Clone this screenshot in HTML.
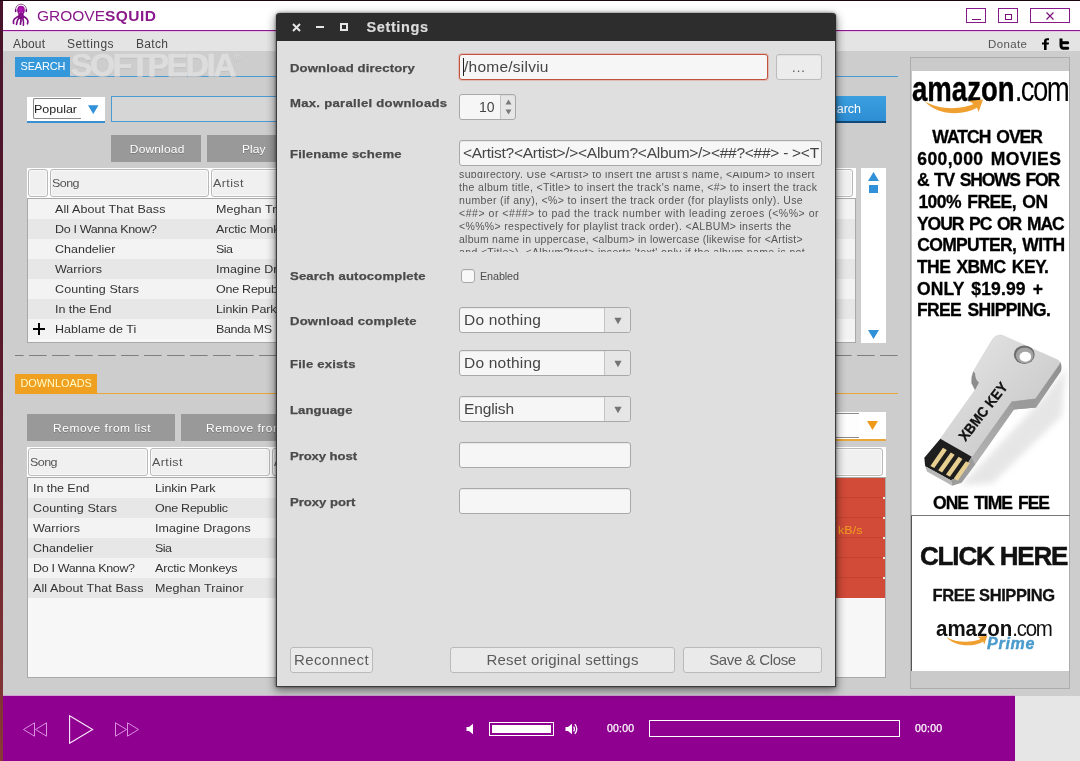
<!DOCTYPE html>
<html>
<head>
<meta charset="utf-8">
<title>GrooveSquid</title>
<style>
*{box-sizing:border-box;margin:0;padding:0}
html,body{width:1080px;height:761px;overflow:hidden}
body{will-change:transform;position:relative;font-family:"Liberation Sans",sans-serif;background:#cdcdcd;color:#333}
.abs,.abs *{position:absolute}
#leftstrip{left:0;top:0;width:3px;height:761px;background:linear-gradient(#46132a 0%,#5c1a2c 50%,#8a3a36 100%);z-index:50}
#topstrip{left:0;top:0;width:1080px;height:1px;background:#1c0612;z-index:51}
#titlebar{left:0;top:0;width:1080px;height:30px;background:#fff}
#titleline{left:0;top:30px;width:1080px;height:2px;background:linear-gradient(#8a1a8c 0,#8a1a8c 50%,#ecc0ec 50%)}
#menubar{left:0;top:32px;width:1080px;height:19px;background:#e4e4e4}
.menu{top:37px;font-size:12px;color:#444;line-height:14px;white-space:nowrap}
.wbtn{top:8px;height:15px;border:1px solid #86188a;background:#fff}
#rightbot{left:1015px;top:696px;width:65px;height:65px;background:#e6e6e6}
#player{left:0;top:696px;width:1015px;height:65px;background:#8f0090}
.tab{color:#fff;font-size:10.9px;line-height:18.4px;padding-left:5.5px;white-space:nowrap}
.gbtn{background:#999;color:#fff;font-size:11px;text-align:center;text-shadow:0 1px 0 #777;white-space:nowrap}
.tbl{background:#fff;overflow:hidden}
.tb{left:0;top:30px;width:100%;height:calc(100% - 30px);border:1px solid #a9a9a9;background:#f7f7f7}
.hc{margin-left:1px;top:1px;height:28px;border:1px solid #b9b9b9;border-radius:3px;background:#f0f0f0;font-size:11.5px;color:#555;line-height:26px;padding-left:1px;box-shadow:inset 0 0 0 1px #fafafa;white-space:nowrap;overflow:hidden}
.w8{display:inline-block;transform:scaleX(1.087);transform-origin:0 50%}
.w8c{display:inline-block;transform:scaleX(1.087);transform-origin:50% 50%}
.w15{display:inline-block;transform:scaleX(1.14);transform-origin:0 50%}
.row{left:1px;margin-top:1px;height:20px;font-size:11.5px;color:#333;line-height:20px;white-space:nowrap}
.row span{top:0}
.row>span{transform:scaleX(1.087);transform-origin:0 50%}
.s{position:static !important}
.ev{background:#f3f3f3}.od{background:#e7e7e7}
</style>
</head>
<body>
<div id="titlebar" class="abs"></div>
<div id="titleline" class="abs"></div>
<div id="menubar" class="abs"></div>
<!--TITLE-->
<svg class="abs" style="left:8px;top:0px" width="30" height="30" viewBox="0 0 30 30">
 <defs><radialGradient id="sq" cx=".5" cy=".4" r=".6"><stop offset="0" stop-color="#c414c6"/><stop offset="1" stop-color="#7c0c80"/></radialGradient></defs>
 <path d="M7.6 11.2C7.2 6.8 9.8 4.2 13 4.2C16.2 4.2 18.8 6.8 18.4 11.2" fill="none" stroke="#5a1060" stroke-width="0.7"/>
 <rect x="6.9" y="9" width="1.5" height="3.2" rx=".7" fill="#6a0c70"/>
 <rect x="17.6" y="9" width="1.5" height="3.2" rx=".7" fill="#6a0c70"/>
 <ellipse cx="13" cy="10.2" rx="3.8" ry="4.4" fill="url(#sq)"/>
 <path d="M10.2 13.4C10.6 15 10.4 16 9.6 16.8L16.4 16.8C15.6 16 15.4 15 15.8 13.4Z" fill="#86108a"/>
 <g fill="none" stroke="#7e0e84" stroke-linecap="round">
  <path d="M10.6 16.2C8.6 17.4 6.2 18 5.6 20.4C5.3 21.6 5.5 22.6 5.6 23.4" stroke-width="1.7"/>
  <path d="M11.6 17C10.2 18.6 8.8 20.2 8.5 24.4" stroke-width="1.7"/>
  <path d="M13 17C13.2 19.4 13 21.8 12.4 24.2" stroke-width="1.7"/>
  <path d="M14.4 17C15.2 19.4 16 21.6 15.4 25.2" stroke-width="1.7"/>
  <path d="M15.4 16.2C17.4 17.4 19.4 18.2 19.8 20.6C20 21.8 19.7 23 19.5 23.8" stroke-width="1.7"/>
 </g>
 <path d="M9.8 16.2H16.2L15.4 19H10.6Z" fill="#7e0e84"/>
 <circle cx="11.8" cy="12.4" r=".55" fill="#d66fda"/><circle cx="14.2" cy="12.4" r=".55" fill="#d66fda"/>
</svg>
<div class="abs" style="left:37px;top:6px;font-size:15.5px;line-height:20px;color:#8a1a8c;white-space:nowrap"><span class="s" style="letter-spacing:-0.01px">GROOVE</span><b class="s" style="letter-spacing:0.48px">SQUID</b></div>
<div class="abs wbtn" style="left:966px;width:20px"><div style="left:5px;top:10px;width:9px;height:1px;background:#7a107c"></div></div>
<div class="abs wbtn" style="left:998px;width:20px"><div style="left:6px;top:5px;width:7px;height:6px;border:1px solid #7a107c"></div></div>
<div class="abs wbtn" style="left:1030px;width:40px"><svg style="left:15px;top:3px" width="8" height="8" viewBox="0 0 8 8"><path d="M0.5 0.5L7.5 7.5M7.5 0.5L0.5 7.5" stroke="#7a107c" stroke-width="1.2"/></svg></div>
<div class="abs menu" style="left:13px"><span class="s" style="letter-spacing:0.16px">About</span></div>
<div class="abs menu" style="left:67px"><span class="s" style="letter-spacing:0.45px">Settings</span></div>
<div class="abs menu" style="left:136px"><span class="s" style="letter-spacing:0.33px">Batch</span></div>
<div class="abs menu" style="left:988px;font-size:11.5px;color:#555"><span class="s" style="letter-spacing:0.38px">Donate</span></div>
<svg class="abs" style="left:1041px;top:38px" width="9" height="12" viewBox="0 0 9 12"><path d="M3 12V6.6H1V4.6H3V3.2C3 1.2 4.2 0.2 6 0.2H8V2.2H6.6C5.8 2.2 5.6 2.6 5.6 3.2V4.6H8L7.7 6.6H5.6V12Z" fill="#000"/></svg>
<svg class="abs" style="left:1058px;top:38px" width="12" height="12" viewBox="0 0 12 12"><path d="M1.5 0.5H4.5V3.3H9.6C10.6 3.3 11.2 4 11.2 4.8C11.2 5.7 10.6 6.3 9.6 6.3H4.5V7.4C4.5 8.2 5 8.7 5.8 8.7H9.6C10.6 8.7 11.2 9.4 11.2 10.2C11.2 11.1 10.6 11.7 9.6 11.7H5.4C3 11.7 1.5 10.2 1.5 7.8Z" fill="#000"/></svg>
<!--MAIN-->
<div class="abs" style="left:15px;top:76px;width:883px;height:1px;background:#4a9ad4"></div>
<div class="abs tab" style="left:15px;top:57px;width:55px;height:20px;background:#3498db"><span class="s" style="letter-spacing:-0.12px">SEARCH</span></div>
<div class="abs" style="left:71px;top:46.5px;font-size:32px;font-weight:bold;color:#dddddd;line-height:36px;text-shadow:0 1px 1px #b9b9b9;white-space:nowrap;-webkit-text-stroke:.7px #dddddd"><span class="s" style="letter-spacing:-2.20px">SOFTPEDIA</span><span class="s" style="font-size:9px;vertical-align:top;letter-spacing:0;font-weight:normal;line-height:22px;-webkit-text-stroke:0">&reg;</span></div>
<div class="abs" style="left:27px;top:97px;width:78px;height:26px;background:#fff;border-bottom:2px solid #3a8fd0">
  <div style="left:6px;top:1px;width:48px;height:21px;border:1px solid #8a8a8a;border-right:none;border-radius:2px 0 0 2px;background:#fdfdfd"></div>
  <div style="left:6.5px;top:4px;font-size:11.5px;line-height:16px;color:#222;"><span class="s w8" style="letter-spacing:-0.01px">Popular</span></div>
  <svg style="left:61.3px;top:8px" width="10.5" height="9" viewBox="0 0 12 10"><path d="M0 0H12L6 10Z" fill="#3090d8"/></svg>
</div>
<div class="abs" style="left:111px;top:96px;width:740px;height:26px;background:#d6d6d6;border:1px solid #4a9ad4"></div>
<div class="abs" style="left:800px;top:96px;width:86px;height:27px;background:linear-gradient(#3b9fe0,#2e8ed4);border-bottom:2px solid #104a78;color:#fff;font-size:12.5px;line-height:27px;padding-left:21.5px"><span class="s" style="letter-spacing:-0.02px">Search</span></div>
<div class="abs gbtn" style="left:111px;top:135px;width:90px;height:27px;line-height:29px;padding-left:2px"><span class="s w8c" style="letter-spacing:0.17px">Download</span></div>
<div class="abs gbtn" style="left:207px;top:135px;width:90px;height:27px;line-height:29px;padding-left:4px"><span class="s w8c" style="letter-spacing:0.07px">Play</span></div>
<div class="abs tbl" style="left:27px;top:168px;width:829px;height:175px">
  <div class="hc" style="left:0px;width:20px"></div>
  <div class="hc" style="left:22px;width:159px"><span class="s w8" style="letter-spacing:-0.52px">Song</span></div>
  <div class="hc" style="left:183px;width:159px"><span class="s w8" style="letter-spacing:0.37px">Artist</span></div>
  <div class="hc" style="left:666px;width:159px"></div>
<div class="tb"></div>
<div class="row ev" style="top:30px;width:calc(100% - 2px)"><span style="left:27px"><span class="s" style="letter-spacing:0.08px">All About That Bass</span></span><span style="left:188px"><span class="s" style="letter-spacing:0.07px">Meghan Trainor</span></span></div>
<div class="row od" style="top:50px;width:calc(100% - 2px)"><span style="left:27px"><span class="s" style="letter-spacing:-0.32px">Do I Wanna Know?</span></span><span style="left:188px"><span class="s" style="letter-spacing:-0.16px">Arctic Monkeys</span></span></div>
<div class="row ev" style="top:70px;width:calc(100% - 2px)"><span style="left:27px"><span class="s" style="letter-spacing:0.00px">Chandelier</span></span><span style="left:188px"><span class="s" style="letter-spacing:-0.49px">Sia</span></span></div>
<div class="row od" style="top:90px;width:calc(100% - 2px)"><span style="left:27px"><span class="s" style="letter-spacing:0.03px">Warriors</span></span><span style="left:188px"><span class="s" style="letter-spacing:0.03px">Imagine Dragons</span></span></div>
<div class="row ev" style="top:110px;width:calc(100% - 2px)"><span style="left:27px"><span class="s" style="letter-spacing:0.09px">Counting Stars</span></span><span style="left:188px"><span class="s" style="letter-spacing:-0.23px">One Republic</span></span></div>
<div class="row od" style="top:130px;width:calc(100% - 2px)"><span style="left:27px"><span class="s" style="letter-spacing:-0.05px">In the End</span></span><span style="left:188px"><span class="s" style="letter-spacing:-0.12px">Linkin Park</span></span></div>
<div class="row ev" style="top:150px;width:calc(100% - 2px)"><span style="left:27px"><span class="s" style="letter-spacing:0.05px">Hablame de Ti</span></span><span style="left:188px"><span class="s" style="letter-spacing:-0.31px">Banda MS</span></span></div>
</div>
<div class="abs" style="left:33px;top:323px;width:12px;height:12px"><div style="left:0;top:5px;width:12px;height:2px;background:#000"></div><div style="left:5px;top:0;width:2px;height:12px;background:#000"></div></div>
<div class="abs" style="left:861px;top:168px;width:25px;height:175px;background:#fff">
  <svg style="left:7px;top:4px" width="11" height="9" viewBox="0 0 11 9"><path d="M0 9H11L5.5 0Z" fill="#3090d8"/></svg>
  <div style="left:8px;top:17px;width:9px;height:8px;background:#3090d8"></div>
  <svg style="left:7px;top:162px" width="11" height="9" viewBox="0 0 11 9"><path d="M0 0H11L5.5 9Z" fill="#3090d8"/></svg>
</div>
<svg class="abs" style="left:15px;top:355px" width="883" height="2"><line x1="0" y1="0.5" x2="883" y2="0.5" stroke="#7e7e7e" stroke-width="1" stroke-dasharray="17.5 5.5" stroke-dashoffset="8.9"/></svg>
<div class="abs" style="left:15px;top:393px;width:883px;height:1px;background:#e8a738"></div>
<div class="abs tab" style="left:15px;top:374px;width:82px;height:20px;background:#f0a020;color:#fffbc8"><span class="s" style="letter-spacing:-0.01px">DOWNLOADS</span></div>
<div class="abs gbtn" style="left:27px;top:414px;width:148px;height:27px;line-height:29px;padding-left:2px"><span class="s w8c" style="letter-spacing:0.48px">Remove from list</span></div>
<div class="abs gbtn" style="left:181px;top:414px;width:148px;height:27px;line-height:29px;text-align:left;padding-left:25px"><span class="s w8" style="letter-spacing:0.48px">Remove from list and disk</span></div>
<div class="abs" style="left:700px;top:412px;width:186px;height:29px;background:#fff;border-bottom:2px solid #e8a738">
  <div style="left:6px;top:1px;width:153px;height:25px;border:1px solid #8a8a8a;border-right:none;background:#fdfdfd"></div>
  <svg style="left:167px;top:9px" width="11" height="9" viewBox="0 0 11 9"><path d="M0 0H11L5.5 9Z" fill="#f0981a"/></svg>
</div>
<div class="abs tbl" style="left:27px;top:447px;width:859px;height:231px">
  <div class="hc" style="left:0px;width:120px"><span class="s w8" style="letter-spacing:-0.52px">Song</span></div>
  <div class="hc" style="left:122px;width:120px"><span class="s w8" style="letter-spacing:0.37px">Artist</span></div>
  <div class="hc" style="left:244px;width:120px">Album</div>
  <div class="hc" style="left:735px;width:120px"></div>
<div class="tb"></div>
<div class="row ev" style="top:30px;width:calc(100% - 2px)"><span style="left:5px"><span class="s" style="letter-spacing:-0.05px">In the End</span></span><span style="left:127px"><span class="s" style="letter-spacing:-0.12px">Linkin Park</span></span></div>
<div class="row od" style="top:50px;width:calc(100% - 2px)"><span style="left:5px"><span class="s" style="letter-spacing:0.09px">Counting Stars</span></span><span style="left:127px"><span class="s" style="letter-spacing:-0.23px">One Republic</span></span></div>
<div class="row ev" style="top:70px;width:calc(100% - 2px)"><span style="left:5px"><span class="s" style="letter-spacing:0.03px">Warriors</span></span><span style="left:127px"><span class="s" style="letter-spacing:0.03px">Imagine Dragons</span></span></div>
<div class="row od" style="top:90px;width:calc(100% - 2px)"><span style="left:5px"><span class="s" style="letter-spacing:0.00px">Chandelier</span></span><span style="left:127px"><span class="s" style="letter-spacing:-0.49px">Sia</span></span></div>
<div class="row ev" style="top:110px;width:calc(100% - 2px)"><span style="left:5px"><span class="s" style="letter-spacing:-0.32px">Do I Wanna Know?</span></span><span style="left:127px"><span class="s" style="letter-spacing:-0.16px">Arctic Monkeys</span></span></div>
<div class="row od" style="top:130px;width:calc(100% - 2px)"><span style="left:5px"><span class="s" style="letter-spacing:0.08px">All About That Bass</span></span><span style="left:127px"><span class="s" style="letter-spacing:0.07px">Meghan Trainor</span></span></div>
  <div style="left:600px;top:31px;width:258px;height:120px;background:#d24a38"><div style="left:0;top:19px;width:258px;height:1px;background:#c4422f"></div><div style="left:256px;top:19px;width:2px;height:2px;background:#f4e4e0"></div><div style="left:0;top:39px;width:258px;height:1px;background:#c4422f"></div><div style="left:256px;top:39px;width:2px;height:2px;background:#f4e4e0"></div><div style="left:0;top:59px;width:258px;height:1px;background:#c4422f"></div><div style="left:256px;top:59px;width:2px;height:2px;background:#f4e4e0"></div><div style="left:0;top:79px;width:258px;height:1px;background:#c4422f"></div><div style="left:256px;top:79px;width:2px;height:2px;background:#f4e4e0"></div><div style="left:0;top:99px;width:258px;height:1px;background:#c4422f"></div><div style="left:256px;top:99px;width:2px;height:2px;background:#f4e4e0"></div></div>
  <div style="left:811px;top:76px;font-size:11.5px;line-height:14px;color:#f0a020;"><span class="s w8" style="letter-spacing:0.05px">kB/s</span></div>
</div>
<!--AD-->
<style>
.adl{margin-top:.7px;-webkit-text-stroke:.3px #000;word-spacing:2px;font-weight:bold;font-size:17.5px;line-height:21px;color:#000;letter-spacing:-.9px;white-space:nowrap}
</style>
<div class="abs" style="left:910px;top:57px;width:160px;height:632px;background:#cacaca;border:1px solid #acacac"></div>
<div class="abs" style="left:912px;top:71px;width:157px;height:444px;background:#fff"></div>
<div class="abs" style="left:911px;top:515px;width:159px;height:1px;background:#777"></div>
<div class="abs" style="left:911px;top:516px;width:1px;height:155px;background:#555"></div>
<div class="abs" style="left:912px;top:516px;width:157px;height:155px;background:#fff"></div>
<div class="abs" id="amz1" style="left:912px;top:70.5px;font-size:34.7px;line-height:36px;color:#000;white-space:nowrap;transform-origin:0 0;transform:scaleX(.795)"><b class="s" style="-webkit-text-stroke:.4px #000">amazon</b><span class="s" style="letter-spacing:-2px">.com</span></div>
<svg class="abs" style="left:924px;top:99px" width="60" height="16" viewBox="0 0 60 16"><path d="M1 2.6C14 10.5 36 11.5 51 4.6L53.5 8.6C38 17.5 12 16 1 2.6Z" fill="#f0a030"/><path d="M45 1.8L59 0.6L54.6 13L52.6 7.4Z" fill="#f0a030"/></svg>
<div class="abs">
<div class="adl" style="top:126.5px;left:932.3px"><span class="s" style="letter-spacing:-0.96px">WATCH OVER</span></div>
<div class="adl" style="top:148.2px;left:917.3px"><span class="s" style="letter-spacing:0.41px">600,000 MOVIES</span></div>
<div class="adl" style="top:169.8px;left:917.0px"><span class="s" style="letter-spacing:-1.20px">&amp; TV SHOWS FOR</span></div>
<div class="adl" style="top:191.4px;left:918.4px"><span class="s" style="letter-spacing:-0.55px">100% FREE, ON</span></div>
<div class="adl" style="top:213.1px;left:917.0px"><span class="s" style="letter-spacing:-1.07px">YOUR PC OR MAC</span></div>
<div class="adl" style="top:234.8px;left:917.3px"><span class="s" style="letter-spacing:-0.68px">COMPUTER, WITH</span></div>
<div class="adl" style="top:256.4px;left:917.0px"><span class="s" style="letter-spacing:-0.60px">THE XBMC KEY.</span></div>
<div class="adl" style="top:278.0px;left:917.0px"><span class="s" style="letter-spacing:0.15px">ONLY $19.99 +</span></div>
<div class="adl" style="top:299.7px;left:917.0px"><span class="s" style="letter-spacing:-0.63px">FREE SHIPPING.</span></div>
</div>
<!--KEY-->
<svg class="abs" style="left:910px;top:325px" width="160" height="165" viewBox="0 0 738 761">
<defs>
<linearGradient id="kg" x1="0" y1="0" x2="1" y2="1"><stop offset="0" stop-color="#e8e8e8"/><stop offset=".45" stop-color="#d6d6d6"/><stop offset="1" stop-color="#c2c2c2"/></linearGradient>
<linearGradient id="ks" x1="0" y1="0" x2="0" y2="1"><stop offset="0" stop-color="#8e8e8e"/><stop offset="1" stop-color="#b4b4b4"/></linearGradient>
<filter id="kb" x="-20%" y="-20%" width="140%" height="140%"><feGaussianBlur stdDeviation="14"/></filter>
</defs>
<path d="M330 640L620 330L720 200L700 420L380 730L230 740Z" fill="#e6e6e6" filter="url(#kb)"/>
<path d="M692 170Q702 185 697 212L582 380L480 390L302 642L285 608L468 352L578 338Z" fill="url(#ks)"/>
<path d="M578 338L582 380L480 390L468 352Z" fill="#9a9a9a"/>
<path d="M375 75Q395 40 425 47L680 160Q695 168 690 180L578 338L468 352L285 608L140 525L300 300L282 268Q280 240 292 215Z" fill="url(#kg)" stroke="#c8c8c8" stroke-width="2"/>
<path d="M292 215Q282 240 284 268L300 300L318 265Q300 250 300 222Z" fill="#8c8c8c"/>
<path d="M140 525L285 608L228 700L188 716L70 652L66 612Z" fill="#1e1e1e"/>
<path d="M285 608L302 642L238 728L195 742L188 716L228 700Z" fill="#9c9c9c"/>
<path d="M70 652L188 716L195 742L78 676Z" fill="#b8b8b8"/>
<path d="M152 566L170 576L112 660L94 650Z M188 588L206 598L148 680L130 670Z M224 608L242 618L184 700L166 690Z M258 628L276 638L220 718L202 708Z" fill="#e6cf90"/>
<ellipse cx="527" cy="137" rx="48" ry="43" fill="#6c6c6c"/>
<ellipse cx="529" cy="140" rx="41" ry="36" fill="#a4a4a4"/>
<ellipse cx="532" cy="146" rx="27" ry="23" fill="#fff"/>
<text transform="translate(256,540) rotate(-52)" font-family="Liberation Sans, sans-serif" font-weight="bold" font-size="66" fill="#111" stroke="#111" stroke-width="1.5" textLength="322" lengthAdjust="spacingAndGlyphs">XBMC KEY</text>
</svg>
<div class="abs adl" style="top:492px;left:933px"><span class="s" style="letter-spacing:-0.95px">ONE TIME FEE</span></div>
<div class="abs" style="left:920px;top:540.5px;font-weight:bold;font-size:26px;line-height:30px;color:#111;white-space:nowrap;-webkit-text-stroke:.5px #111"><span class="s" style="letter-spacing:-1.16px">CLICK HERE</span></div>
<div class="abs" style="left:932.5px;top:585px;font-weight:bold;font-size:16.5px;line-height:20px;color:#111;white-space:nowrap;-webkit-text-stroke:.3px #111"><span class="s" style="letter-spacing:-0.41px">FREE SHIPPING</span></div>
<div class="abs" id="amz2" style="left:935.5px;top:617.2px;font-size:21.8px;line-height:23px;color:#111;white-space:nowrap;transform-origin:0 0;transform:scaleX(.94)"><b class="s">amazon</b><span class="s" style="letter-spacing:-1.35px">.com</span></div>
<svg class="abs" style="left:946px;top:635px" width="42" height="12" viewBox="0 0 60 16"><path d="M1 2.6C14 10.5 36 11.5 51 4.6L53.5 8.6C38 17.5 12 16 1 2.6Z" fill="#f0a030"/><path d="M45 1.8L59 0.6L54.6 13L52.6 7.4Z" fill="#f0a030"/></svg>
<div class="abs" style="left:987px;top:634.5px;font-size:16px;line-height:18px;font-weight:bold;font-style:italic;color:#4a9bcc;white-space:nowrap;-webkit-text-stroke:.4px #4a9bcc"><span class="s" style="letter-spacing:0.76px">Prime</span></div>
<div id="player" class="abs"></div>
<div class="abs" style="left:0;top:695px;width:1015px;height:1px;background:#d3a2d5"></div>
<div id="rightbot" class="abs"></div>
<!--PLAYER-->
<svg class="abs" style="left:22px;top:721px" width="27" height="17" viewBox="0 0 27 17"><path d="M12.5 1.8V15.2L1.5 8.5Z M24.5 1.8V15.2L13.5 8.5Z" fill="none" stroke="#dc8fe0" stroke-width="1"/></svg>
<svg class="abs" style="left:68px;top:714px" width="27" height="31" viewBox="0 0 27 31"><path d="M1.6 1.8V29.2L24.6 15.5Z" fill="none" stroke="#fbeafc" stroke-width="1.1"/></svg>
<svg class="abs" style="left:114px;top:721px" width="27" height="17" viewBox="0 0 27 17"><path d="M1.5 1.8V15.2L12.5 8.5Z M13.5 1.8V15.2L24.5 8.5Z" fill="none" stroke="#dc8fe0" stroke-width="1"/></svg>
<svg class="abs" style="left:466px;top:723px" width="8" height="12" viewBox="0 0 8 12"><path d="M0.5 4H3L7 0.8V11.2L3 8H0.5Z" fill="#fff"/></svg>
<div class="abs" style="left:489px;top:722px;width:65px;height:14px;border:1px solid #fff"><div style="left:2px;top:2px;width:59px;height:8px;background:#fff"></div></div>
<svg class="abs" style="left:565px;top:722px" width="14" height="14" viewBox="0 0 14 14"><path d="M0.5 5H3L7 1.8V12.2L3 9H0.5Z" fill="#fff"/><path d="M8.6 4.6Q10.4 7 8.6 9.4" fill="none" stroke="#fff" stroke-width="1.2"/><path d="M9.8 2.2Q13.8 7 9.8 11.8" fill="none" stroke="#fff" stroke-width="1.3"/></svg>
<div class="abs" style="left:607px;top:722px;font-size:10.5px;line-height:13px;color:#fff;white-space:nowrap;-webkit-text-stroke:.25px #fff"><span class="s" style="letter-spacing:0.18px">00:00</span></div>
<div class="abs" style="left:649px;top:720px;width:251px;height:17px;border:1px solid #fff"></div>
<div class="abs" style="left:915px;top:722px;font-size:10.5px;line-height:13px;color:#fff;white-space:nowrap;-webkit-text-stroke:.25px #fff"><span class="s" style="letter-spacing:0.18px">00:00</span></div>
<!--DIALOG-->
<style>
#dlg{left:276px;top:13px;width:560px;height:674px;background:#dfdfdf;border:1px solid #3c3c3c;border-top:none;box-shadow:0 3px 10px 1px rgba(0,0,0,.45),0 0 3px rgba(0,0,0,.55);z-index:20;border-radius:4px 4px 0 0}
#dtitle{left:-1px;top:0;width:560px;height:28px;background:#2d2d2d;border-radius:4px 4px 0 0}
.lab{left:12.5px;margin-top:1px;font-weight:bold;font-size:11.5px;line-height:14px;color:#4a4a4a;white-space:nowrap;-webkit-text-stroke:.25px #4a4a4a}
.inp{border:1px solid #a8a8a8;border-radius:3px;background:#f6f6f6;box-shadow:inset 0 1px 1px rgba(0,0,0,.06)}
.itx{font-size:15.5px;line-height:18px;color:#454545;white-space:nowrap}
.dbtn{border:1px solid #bababa;border-radius:3px;background:#eaeaea;top:634px;height:26px;font-size:15px;line-height:23px;color:#5c5c5c;white-space:nowrap;text-align:center}
#help{left:182px;top:159px;width:364px;height:80px;overflow:hidden;font-size:10.5px;line-height:13px;color:#555;white-space:nowrap}
</style>
<div id="dlg" class="abs">
<div id="dtitle">
 <svg style="left:16px;top:10px" width="9" height="9" viewBox="0 0 9 9"><path d="M1 1L8 8M8 1L1 8" stroke="#e6e6e6" stroke-width="2"/></svg>
 <div style="left:40px;top:13px;width:8px;height:2px;background:#e6e6e6"></div>
 <div style="left:64px;top:10px;width:8px;height:8px;border:2px solid #e6e6e6"></div>
 <div style="left:90.5px;top:5.5px;font-size:14.5px;font-weight:bold;color:#dcdcdc;-webkit-text-stroke:.2px #dcdcdc;line-height:17px;white-space:nowrap"><span class="s" style="letter-spacing:0.61px">Settings</span></div>
</div>
<div class="lab" style="top:47px"><span class="s w15" style="letter-spacing:0.13px">Download directory</span></div>
<div class="lab" style="top:82px"><span class="s w15" style="letter-spacing:0.25px">Max. parallel downloads</span></div>
<div class="lab" style="top:133px"><span class="s w15" style="letter-spacing:0.14px">Filename scheme</span></div>
<div class="lab" style="top:255px"><span class="s w15" style="letter-spacing:0.14px">Search autocomplete</span></div>
<div class="lab" style="top:300px"><span class="s w15" style="letter-spacing:0.15px">Download complete</span></div>
<div class="lab" style="top:343px"><span class="s w15" style="letter-spacing:0.18px">File exists</span></div>
<div class="lab" style="top:389px"><span class="s w15" style="letter-spacing:0.07px">Language</span></div>
<div class="lab" style="top:435px"><span class="s w15" style="letter-spacing:-0.07px">Proxy host</span></div>
<div class="lab" style="top:481px"><span class="s w15" style="letter-spacing:-0.01px">Proxy port</span></div>

<div class="inp" style="left:182px;top:41px;width:309px;height:26px;border-color:#c1523d;box-shadow:0 0 0 1px rgba(220,120,100,.35)"><div style="left:3px;top:3px;width:1px;height:18px;background:#222"></div><div class="itx" style="left:4px;top:3px"><span class="s" style="letter-spacing:0.24px">/home/silviu</span></div></div>
<div class="inp" style="left:499px;top:41px;width:46px;height:26px;background:#ececec;border-color:#bcbcbc"><div style="left:0;top:4.5px;width:44px;text-align:center;font-size:13px;color:#555;letter-spacing:1px">...</div></div>
<div class="inp" style="left:182px;top:81px;width:57px;height:26px;background:#e6e6e6"><div style="left:0;top:0;width:41px;height:24px;background:#f6f6f6;border-right:1px solid #c4c4c4;border-radius:3px 0 0 3px"></div><div class="itx" style="left:19px;top:2.5px;font-size:14px"><span class="s" style="letter-spacing:-0.08px">10</span></div>
<svg style="left:45px;top:4px" width="7" height="16" viewBox="0 0 7 16"><path d="M0.5 5.5H6.5L3.5 0.5Z M0.5 10.5H6.5L3.5 15.5Z" fill="#7a7a7a"/></svg></div>
<div class="inp" style="left:182px;top:127px;width:363px;height:26px;overflow:hidden"><div class="itx" style="left:3px;top:3px"><span class="s" style="letter-spacing:-0.26px">&lt;Artist?&lt;Artist&gt;/&gt;&lt;Album?&lt;Album&gt;/&gt;&lt;##?&lt;##&gt; - &gt;&lt;T</span></div></div>
<div id="help">
<div style="left:0;top:-3.60px"><span class="s" style="letter-spacing:0.38px">subdirectory. Use &lt;Artist&gt; to insert the artist's name, &lt;Album&gt; to insert</span></div>
<div style="left:0;top:9.35px"><span class="s" style="letter-spacing:0.37px">the album title, &lt;Title&gt; to insert the track's name, &lt;#&gt; to insert the track</span></div>
<div style="left:0;top:22.30px"><span class="s" style="letter-spacing:0.36px">number (if any), &lt;%&gt; to insert the track order (for playlists only). Use</span></div>
<div style="left:0;top:35.25px"><span class="s" style="letter-spacing:0.53px">&lt;##&gt; or &lt;###&gt; to pad the track number with leading zeroes (&lt;%%&gt; or</span></div>
<div style="left:0;top:48.20px"><span class="s" style="letter-spacing:0.33px">&lt;%%%&gt; respectively for playlist track order). &lt;ALBUM&gt; inserts the</span></div>
<div style="left:0;top:61.15px"><span class="s" style="letter-spacing:0.26px">album name in uppercase, &lt;album&gt; in lowercase (likewise for &lt;Artist&gt;</span></div>
<div style="left:0;top:74.10px"><span class="s" style="letter-spacing:0.36px">and &lt;Title&gt;). &lt;Album?text&gt; inserts 'text' only if the album name is not</span></div>
</div>
<div class="inp" style="left:184px;top:256px;width:14px;height:14px;background:#f8f8f8"></div>
<div style="left:203px;top:257px;font-size:10.8px;line-height:12px;color:#4c4c4c;white-space:nowrap"><span class="s" style="letter-spacing:-0.10px">Enabled</span></div>
<div class="inp" style="left:182px;top:294px;width:172px;height:26px"><div style="left:144px;top:0;width:1px;height:24px;background:#c4c4c4"></div><div style="left:145px;top:0;width:25px;height:24px;background:#e6e6e6;border-radius:0 3px 3px 0"></div><svg style="left:154px;top:8.5px" width="8" height="8" viewBox="0 0 10 9"><path d="M0.5 0.5H9.5L5 8.5Z" fill="#747474"/></svg><div class="itx" style="left:4px;top:3px"><span class="s" style="letter-spacing:0.22px">Do nothing</span></div></div>
<div class="inp" style="left:182px;top:337px;width:172px;height:26px"><div style="left:144px;top:0;width:1px;height:24px;background:#c4c4c4"></div><div style="left:145px;top:0;width:25px;height:24px;background:#e6e6e6;border-radius:0 3px 3px 0"></div><svg style="left:154px;top:8.5px" width="8" height="8" viewBox="0 0 10 9"><path d="M0.5 0.5H9.5L5 8.5Z" fill="#747474"/></svg><div class="itx" style="left:4px;top:3px"><span class="s" style="letter-spacing:0.22px">Do nothing</span></div></div>
<div class="inp" style="left:182px;top:383px;width:172px;height:26px"><div style="left:144px;top:0;width:1px;height:24px;background:#c4c4c4"></div><div style="left:145px;top:0;width:25px;height:24px;background:#e6e6e6;border-radius:0 3px 3px 0"></div><svg style="left:154px;top:8.5px" width="8" height="8" viewBox="0 0 10 9"><path d="M0.5 0.5H9.5L5 8.5Z" fill="#747474"/></svg><div class="itx" style="left:4px;top:3px"><span class="s" style="letter-spacing:-0.14px">English</span></div></div>

<div class="inp" style="left:182px;top:429px;width:172px;height:26px"></div>
<div class="inp" style="left:182px;top:475px;width:172px;height:26px"></div>
<div class="dbtn" style="left:13px;width:83px"><span class="s" style="letter-spacing:0.35px">Reconnect</span></div>
<div class="dbtn" style="left:173px;width:225px"><span class="s" style="letter-spacing:0.20px">Reset original settings</span></div>
<div class="dbtn" style="left:406px;width:139px"><span class="s" style="letter-spacing:-0.35px">Save &amp; Close</span></div>
</div>
<div id="leftstrip" class="abs"></div>
<div id="topstrip" class="abs"></div>
</body>
</html>
